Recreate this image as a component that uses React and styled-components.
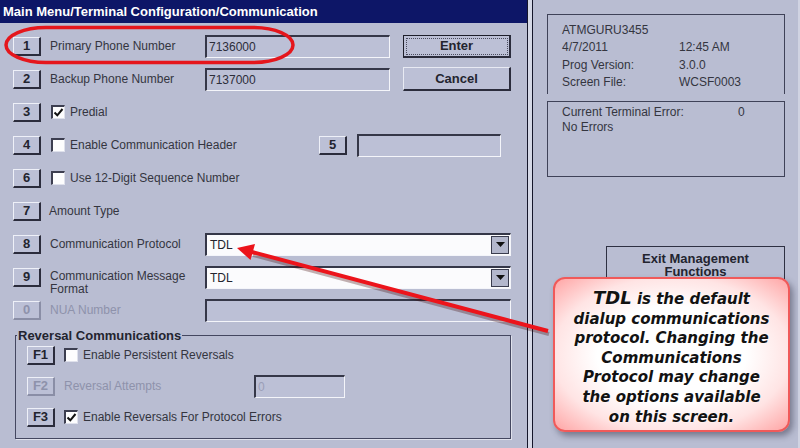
import React from "react";
import styled, { createGlobalStyle } from "styled-components";

const GlobalStyle = createGlobalStyle`
  html, body {
    margin: 0;
    padding: 0;
    background: #b9bdd2;
  }
  body {
    font-family: "Liberation Sans", Arial, sans-serif;
  }
`;

const Screen = styled.div`
  position: relative;
  width: 800px;
  height: 448px;
  display: flex;
  background: #b9bdd2;
  color: #2c2d3a;
  font-size: 12px;
  overflow: hidden;
`;

const LeftPane = styled.div`
  width: 527px;
  display: flex;
  flex-direction: column;
`;

const TitleBar = styled.div`
  height: 23px;
  background: #0d1667;
  color: #fff;
  font-weight: bold;
  font-size: 13px;
  line-height: 24px;
  padding-left: 3px;
  white-space: nowrap;
`;

const Form = styled.div`
  display: flex;
  flex-direction: column;
  gap: 9px;
  padding: 11px 0 0 13px;
`;

const Row = styled.div`
  display: flex;
  align-items: center;
  height: ${(p) => p.$h || 24}px;
`;

const Key = styled.div`
  box-sizing: border-box;
  width: 28px;
  height: 19px;
  flex: none;
  display: flex;
  align-items: center;
  justify-content: center;
  font-weight: bold;
  font-size: 13px;
  color: ${(p) => (p.$disabled ? "#8e92ab" : "#23242f")};
  background: #bcc0d6;
  border-top: 1px solid #eef0f8;
  border-left: 1px solid #eef0f8;
  border-right: 2px solid ${(p) => (p.$disabled ? "#8a8ea6" : "#2b2c3c")};
  border-bottom: 2px solid ${(p) => (p.$disabled ? "#8a8ea6" : "#2b2c3c")};
`;

const Label = styled.div`
  flex: none;
  width: ${(p) => (p.$w ? `${p.$w}px` : "auto")};
  margin-left: ${(p) => p.$ml ?? 9}px;
  color: ${(p) => (p.$disabled ? "#8e92ab" : "#34353f")};
  white-space: nowrap;
  line-height: 13px;
  align-self: ${(p) => (p.$top ? "flex-start" : "center")};
  padding-top: ${(p) => (p.$top ? 5 : 0)}px;
`;

const TextBox = styled.div`
  box-sizing: border-box;
  flex: none;
  width: ${(p) => p.$w}px;
  height: 23px;
  margin-left: ${(p) => p.$ml || 0}px;
  padding: 3px 0 0 2px;
  background: #bcc0d6;
  color: ${(p) => (p.$disabled ? "#9a9eb6" : "#2c2d3a")};
  border-top: 2px solid #353748;
  border-left: 2px solid #353748;
  border-right: 1px solid #f4f5fa;
  border-bottom: 1px solid #f4f5fa;
`;

const Combo = styled.div`
  box-sizing: border-box;
  width: 306px;
  height: 23px;
  display: flex;
  align-items: center;
  justify-content: space-between;
  padding: 0 1px 0 3px;
  background: #fbfbfd;
  color: #23242f;
  border-top: 2px solid #353748;
  border-left: 2px solid #353748;
  border-right: 1px solid #f4f5fa;
  border-bottom: 1px solid #f4f5fa;
`;

const ComboArrow = styled.div`
  box-sizing: border-box;
  width: 18px;
  height: 18px;
  display: flex;
  align-items: center;
  justify-content: center;
  background: #b3b7cc;
  border: 1px solid #3a3c4e;
`;

const CheckBox = styled.div`
  box-sizing: border-box;
  width: 14px;
  height: 14px;
  flex: none;
  margin-left: ${(p) => p.$ml ?? 10}px;
  background: #fdfdfe;
  border-top: 2px solid #3c3e50;
  border-left: 2px solid #3c3e50;
  border-right: 1px solid #dfe1ec;
  border-bottom: 1px solid #dfe1ec;
  display: flex;
  align-items: center;
  justify-content: center;
`;

const ActionButton = styled.div`
  box-sizing: border-box;
  width: 108px;
  height: ${(p) => (p.$focused ? 23 : 24)}px;
  margin-left: 13px;
  display: flex;
  align-items: center;
  justify-content: center;
  font-weight: bold;
  font-size: 13px;
  color: #23242f;
  background: #bcc0d6;
  border: 1px solid ${(p) => (p.$focused ? "#1d1e2a" : "#e8eaf3")};
  border-right: 2px solid #2b2c3c;
  border-bottom: 2px solid #2b2c3c;
  outline: ${(p) => (p.$focused ? "1px dotted #4a4c5e" : "none")};
  outline-offset: -4px;
`;

const Group = styled.fieldset`
  margin: -3px 0 0 2px;
  width: 496px;
  box-sizing: border-box;
  height: 111px;
  padding: 1px 0 0 11px;
  border: 1px solid #444760;
  box-shadow: 1px 1px 0 #dfe1ec;
  display: flex;
  flex-direction: column;
  gap: 9px;
`;

const GroupTitle = styled.legend`
  margin-left: -10px;
  padding: 0 1px;
  font-weight: bold;
  font-size: 13px;
  color: #23242f;
`;

const Divider = styled.div`
  width: 4px;
  background: #d6d9e7;
  border-left: 1px solid #15162a;
  border-right: 1px solid #15162a;
`;

const RightPane = styled.div`
  flex: 1;
  display: flex;
  flex-direction: column;
  padding: 14px 13px 0 14px;
  border-top: 2px solid #e4e6f0;
  border-right: 2px solid #d0d3e2;
  margin-top: -2px;
`;

const InfoBox = styled.div`
  box-sizing: border-box;
  height: 80px;
  border: 1px solid #3f4258;
  border-bottom: none;
  padding: 6px 0 0 14px;
  display: grid;
  grid-template-columns: ${(p) => p.$col}px auto;
  grid-auto-rows: 17.5px;
  align-items: center;
  color: #34353f;
`;

const ErrorBox = styled(InfoBox)`
  margin-top: 7px;
  height: 76px;
  border-bottom: 1px solid #3f4258;
  padding-top: 2px;
  grid-auto-rows: 15px;
`;

const ExitButton = styled.div`
  box-sizing: border-box;
  align-self: flex-end;
  width: 179px;
  height: 48px;
  margin-top: 69px;
  border: 1px solid #2e3042;
  font-weight: bold;
  font-size: 13px;
  line-height: 13px;
  text-align: center;
  padding-top: 5px;
  color: #23242f;
`;

const Overlay = styled.svg`
  position: absolute;
  left: 0;
  top: 0;
  pointer-events: none;
`;

const Callout = styled.div`
  position: absolute;
  left: 553px;
  top: 277px;
  width: 237px;
  height: 155px;
  box-sizing: border-box;
  border: 2px solid #f05a5a;
  border-radius: 12px;
  background: radial-gradient(ellipse at center, #ffffff 45%, #ffe4e4 72%, #ffa5a5 100%);
  box-shadow: 3px 4px 6px rgba(40, 40, 60, 0.45);
  padding-top: 9px;
  text-align: center;
  font-family: "DejaVu Sans", Verdana, sans-serif;
  font-weight: bold;
  font-style: italic;
  font-size: 15px;
  line-height: 19.6px;
  color: #121212;
  text-shadow: 0 0 2px #fff;
`;

const Big = styled.span`
  font-size: 18px;
`;

const Check = () => (
  <svg width="11" height="11" viewBox="0 0 11 11">
    <path d="M1.5 5.5 L4.3 8.3 L9.5 2" fill="none" stroke="#111" strokeWidth="2" />
  </svg>
);

const DownArrow = () => (
  <svg width="9" height="5" viewBox="0 0 9 5">
    <polygon points="0,0 9,0 4.5,5" fill="#111" />
  </svg>
);

export default function App() {
  return (
    <>
      <GlobalStyle />
      <Screen>
        <LeftPane>
          <TitleBar>Main Menu/Terminal Configuration/Communication</TitleBar>
          <Form>
            <Row>
              <Key>1</Key>
              <Label $w={155}>Primary Phone Number</Label>
              <TextBox $w={185}>7136000</TextBox>
              <ActionButton $focused>Enter</ActionButton>
            </Row>
            <Row>
              <Key>2</Key>
              <Label $w={155}>Backup Phone Number</Label>
              <TextBox $w={185}>7137000</TextBox>
              <ActionButton>Cancel</ActionButton>
            </Row>
            <Row>
              <Key>3</Key>
              <CheckBox><Check /></CheckBox>
              <Label $ml={5}>Predial</Label>
            </Row>
            <Row>
              <Key>4</Key>
              <CheckBox />
              <Label $ml={5} $w={249}>Enable Communication Header</Label>
              <Key>5</Key>
              <TextBox $w={144} $ml={10} />
            </Row>
            <Row>
              <Key>6</Key>
              <CheckBox />
              <Label $ml={5}>Use 12-Digit Sequence Number</Label>
            </Row>
            <Row>
              <Key>7</Key>
              <Label $ml={8}>Amount Type</Label>
            </Row>
            <Row>
              <Key>8</Key>
              <Label $w={155}>Communication Protocol</Label>
              <Combo>
                TDL
                <ComboArrow><DownArrow /></ComboArrow>
              </Combo>
            </Row>
            <Row>
              <Key>9</Key>
              <Label $w={155} $top>
                Communication Message
                <br />
                Format
              </Label>
              <Combo>
                TDL
                <ComboArrow><DownArrow /></ComboArrow>
              </Combo>
            </Row>
            <Row>
              <Key $disabled>0</Key>
              <Label $w={155} $disabled>NUA Number</Label>
              <TextBox $w={306} $disabled />
            </Row>
            <Group>
              <GroupTitle>Reversal Communications</GroupTitle>
              <Row $h={22}>
                <Key>F1</Key>
                <CheckBox $ml={9} />
                <Label $ml={5}>Enable Persistent Reversals</Label>
              </Row>
              <Row $h={22}>
                <Key $disabled>F2</Key>
                <Label $w={190} $disabled>Reversal Attempts</Label>
                <TextBox $w={91} $disabled>0</TextBox>
              </Row>
              <Row $h={22}>
                <Key>F3</Key>
                <CheckBox $ml={9}><Check /></CheckBox>
                <Label $ml={5}>Enable Reversals For Protocol Errors</Label>
              </Row>
            </Group>
          </Form>
        </LeftPane>
        <Divider />
        <RightPane>
          <InfoBox $col={117}>
            <span>ATMGURU3455</span>
            <span />
            <span>4/7/2011</span>
            <span>12:45 AM</span>
            <span>Prog Version:</span>
            <span>3.0.0</span>
            <span>Screen File:</span>
            <span>WCSF0003</span>
          </InfoBox>
          <ErrorBox $col={176}>
            <span>Current Terminal Error:</span>
            <span>0</span>
            <span>No Errors</span>
          </ErrorBox>
          <ExitButton>
            Exit Management
            <br />
            Functions
          </ExitButton>
        </RightPane>

        <Overlay width="800" height="448" viewBox="0 0 800 448">
          <rect x="6" y="27.5" width="287" height="35" rx="40" ry="17.5" fill="none" stroke="#e5161c" strokeWidth="3.5" />
          <line x1="548" y1="332" x2="252" y2="253" stroke="rgba(60,0,0,0.3)" strokeWidth="4" transform="translate(1 2)" />
          <line x1="548" y1="331" x2="252" y2="252" stroke="#ec141b" strokeWidth="4" />
          <polygon points="237,248 255,244 250.5,260" fill="#ec141b" />
        </Overlay>

        <Callout>
          <Big>TDL</Big> is the default
          <br />
          dialup communications
          <br />
          protocol. Changing the
          <br />
          Communications
          <br />
          Protocol may change
          <br />
          the options available
          <br />
          on this screen.
        </Callout>
      </Screen>
    </>
  );
}
